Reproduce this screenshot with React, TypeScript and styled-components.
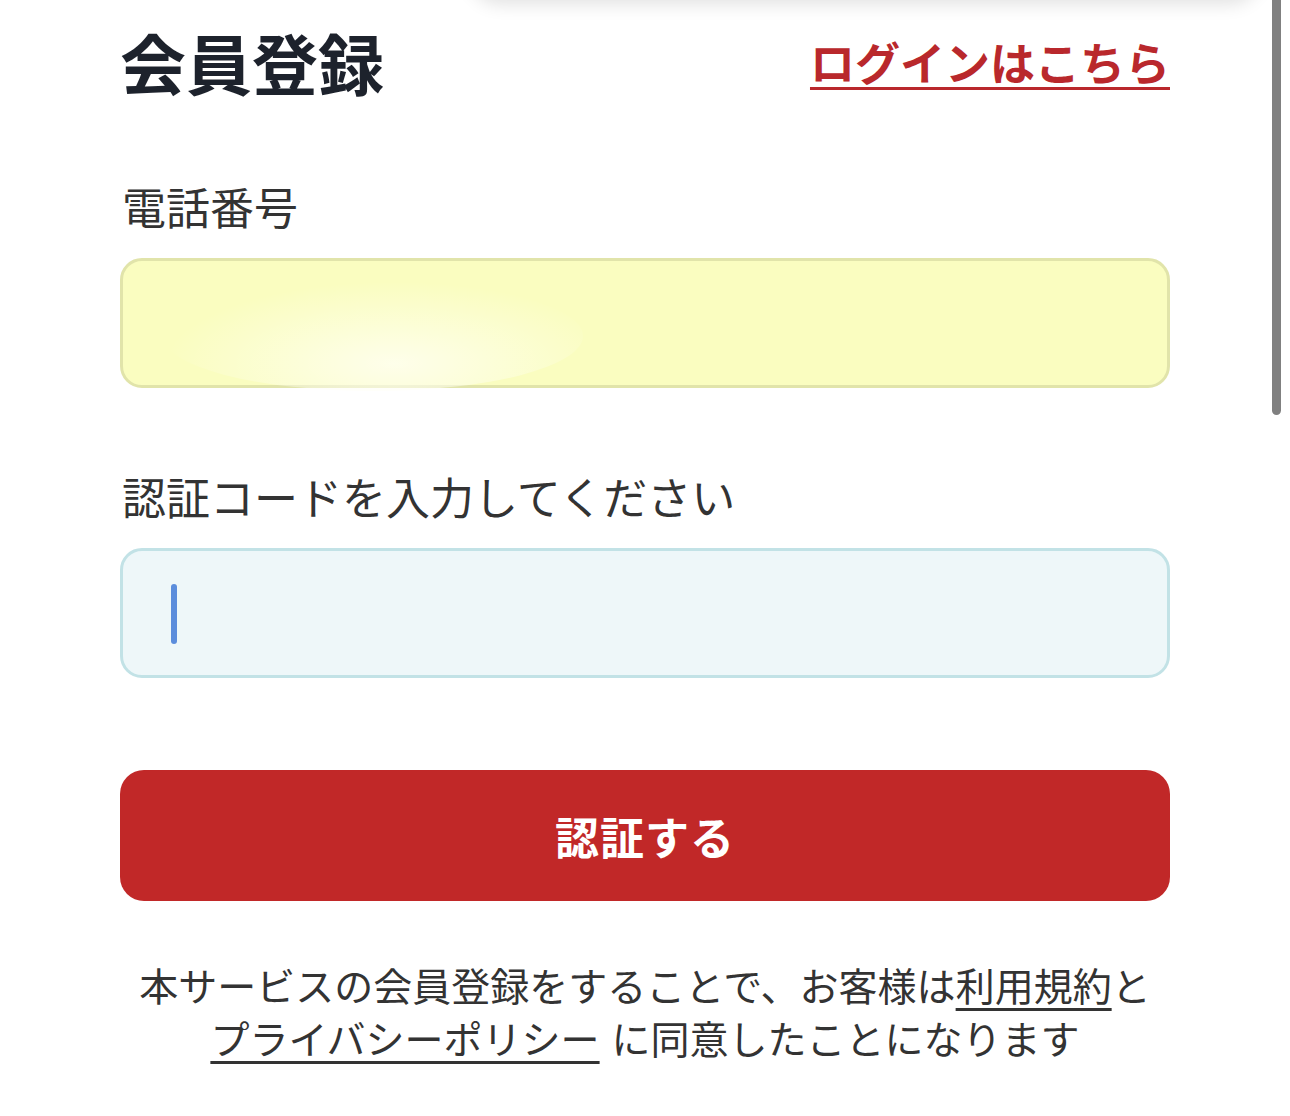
import styled, { createGlobalStyle } from 'styled-components'

const GlobalStyle = createGlobalStyle`
  html, body {
    margin: 0;
    padding: 0;
    background: #ffffff;
  }
  body {
    font-family: "Noto Sans CJK JP", "Noto Sans", sans-serif;
    color: #333333;
    overflow: hidden;
  }
`;

const Page = styled.div`
  position: relative;
  width: 1290px;
  height: 1116px;
  overflow: hidden;
  background: #ffffff;
`;

const TopSheet = styled.div`
  position: absolute;
  top: -60px;
  left: 470px;
  width: 790px;
  height: 60px;
  border-radius: 0 0 30px 30px;
  background: #ffffff;
  box-shadow: 0 4px 18px rgba(0, 0, 0, 0.12);
`;

const ScrollThumb = styled.div`
  position: absolute;
  top: -10px;
  right: 9px;
  width: 9px;
  height: 425px;
  border-radius: 5px;
  background: #808080;
`;

const Content = styled.main`
  display: flex;
  flex-direction: column;
  padding: 13px 120px 0;
`;

const Header = styled.header`
  display: flex;
  justify-content: space-between;
  align-items: center;
`;

const Title = styled.h1`
  margin: 0;
  font-size: 66px;
  font-weight: 700;
  line-height: 96px;
  color: #1d222c;
`;

const LoginLink = styled.a`
  font-size: 45px;
  font-weight: 700;
  color: #b9282c;
  text-decoration: underline;
  text-decoration-thickness: 3px;
  text-underline-offset: 6px;
`;

const Field = styled.div<{ $top: number }>`
  display: flex;
  flex-direction: column;
  gap: 20px;
  margin-top: ${({ $top }) => $top}px;
`;

const Label = styled.label`
  font-size: 44px;
  line-height: 64px;
  color: #333333;
  padding-left: 2px;
`;

const Input = styled.div<{ $bg: string; $border: string }>`
  position: relative;
  height: 124px;
  border-radius: 22px;
  border: 3px solid ${({ $border }) => $border};
  background: ${({ $bg }) => $bg};
`;

const Glow = styled.div`
  position: absolute;
  left: 40px;
  top: 20px;
  width: 420px;
  height: 110px;
  border-radius: 50%;
  background: radial-gradient(ellipse at 55% 75%, rgba(255, 255, 245, 0.8), rgba(250, 253, 192, 0) 70%);
`;

const Caret = styled.span`
  position: absolute;
  left: 48px;
  top: 33px;
  width: 6px;
  height: 60px;
  border-radius: 3px;
  background: #5b8ddc;
`;

const SubmitButton = styled.button`
  margin-top: 92px;
  height: 131px;
  border: none;
  border-radius: 24px;
  background: #c12828;
  color: #ffffff;
  font-family: inherit;
  font-size: 44px;
  font-weight: 700;
  letter-spacing: 1px;
`;

const Notice = styled.p`
  margin: 57px -20px 0;
  text-align: center;
  font-size: 39px;
  line-height: 53px;
  color: #333333;
`;

const NoticeLink = styled.a<{ $gap?: number }>`
  color: #333333;
  text-decoration: underline;
  text-decoration-thickness: 3px;
  text-underline-offset: 7px;
  margin-right: ${({ $gap }) => $gap ?? 0}px;
`;

export default function App() {
  return (
    <>
      <GlobalStyle />
      <Page>
        <Content>
          <Header>
            <Title>会員登録</Title>
            <LoginLink href="#">ログインはこちら</LoginLink>
          </Header>

          <Field $top={65}>
            <Label>電話番号</Label>
            <Input $bg="#fafdc0" $border="#e1e4aa">
              <Glow />
            </Input>
          </Field>

          <Field $top={76}>
            <Label>認証コードを入力してください</Label>
            <Input $bg="#eef7f9" $border="#c2e2e6">
              <Caret />
            </Input>
          </Field>

          <SubmitButton>認証する</SubmitButton>

          <Notice>
            本サービスの会員登録をすることで、お客様は<NoticeLink href="#">利用規約</NoticeLink>と
            <br />
            <NoticeLink href="#" $gap={12}>プライバシーポリシー</NoticeLink>に同意したことになります
          </Notice>
        </Content>
        <TopSheet />
        <ScrollThumb />
      </Page>
    </>
  );
}
